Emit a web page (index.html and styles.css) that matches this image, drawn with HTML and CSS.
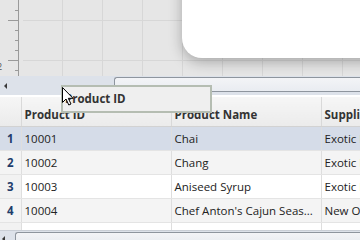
FILE: index.html
```html
<!DOCTYPE html>
<html lang="en">
<head>
    <meta charset="UTF-8">
    <title>Products</title>
    <link rel="stylesheet" href="styles.css">
</head>
<body>
    <div class="screen">
        <div class="designer">
            <svg class="ruler" width="23" height="76" viewBox="0 0 23 76">
                <line x1="18.5" y1="0" x2="18.5" y2="76" stroke="#9a9a9a"/>
                <g stroke="#9a9a9a">
                    <line x1="15" y1="10.5" x2="18" y2="10.5"/>
                    <line x1="8" y1="20.5" x2="18" y2="20.5"/>
                    <line x1="15" y1="30.5" x2="18" y2="30.5"/>
                    <line x1="15" y1="40.5" x2="18" y2="40.5"/>
                    <line x1="15" y1="50.5" x2="18" y2="50.5"/>
                    <line x1="8" y1="60.5" x2="18" y2="60.5"/>
                    <line x1="15" y1="70.5" x2="18" y2="70.5"/>
                </g>
                <text x="-3" y="70" font-size="9" fill="#555" font-family="Open Sans, sans-serif">2</text>
            </svg>
            <div class="canvas">
                <div class="node"></div>
            </div>
        </div>

        <div class="hbar hbar-top">
            <span class="arrow"></span>
            <div class="thumb"></div>
        </div>

        <table class="grid">
            <colgroup>
                <col class="col-rownum">
                <col class="col-wide">
                <col class="col-wide">
                <col class="col-wide">
            </colgroup>
            <thead>
                <tr>
                    <th class="rownum"></th>
                    <th>Product ID</th>
                    <th>Product Name</th>
                    <th>Supplier</th>
                </tr>
            </thead>
            <tbody>
                <tr class="selected">
                    <td class="rownum">1</td>
                    <td>10001</td>
                    <td>Chai</td>
                    <td>Exotic Liquids</td>
                </tr>
                <tr class="alt">
                    <td class="rownum">2</td>
                    <td>10002</td>
                    <td>Chang</td>
                    <td>Exotic Liquids</td>
                </tr>
                <tr>
                    <td class="rownum">3</td>
                    <td>10003</td>
                    <td>Aniseed Syrup</td>
                    <td>Exotic Liquids</td>
                </tr>
                <tr class="alt">
                    <td class="rownum">4</td>
                    <td>10004</td>
                    <td>Chef Anton's Cajun Seas...</td>
                    <td>New Orleans Cajun Delights</td>
                </tr>
                <tr class="partial">
                    <td class="rownum"></td>
                    <td></td>
                    <td></td>
                    <td></td>
                </tr>
            </tbody>
        </table>

        <div class="hbar hbar-bottom">
            <span class="arrow"></span>
            <div class="thumb"><span class="grip">||||</span></div>
        </div>

        <div class="drag-ghost">Product ID</div>
        <svg class="cursor" width="13" height="19" viewBox="0 0 13 19">
            <path d="M0.5 0.5 L0.5 15.5 L4 12 L6.8 18 L9 17 L6.3 11.3 L11 11.3 Z" fill="#fff" stroke="#000" stroke-width="1"/>
        </svg>
    </div>
</body>
</html>
```

FILE: styles.css
```css
body {
    margin: 0;
    font-family: "Open Sans", Arial, sans-serif;
    font-size: 11.5px;
    color: #222;
}

.screen {
    position: relative;
    width: 360px;
    height: 240px;
    overflow: hidden;
    background: #ffffff;
    display: flex;
    flex-direction: column;
}

/* diagram designer area */

.designer {
    display: flex;
    height: 76px;
    background: #e6e6e6;
    overflow: hidden;
    flex-shrink: 0;
}

.ruler {
    display: block;
    flex-shrink: 0;
}

.canvas {
    position: relative;
    flex: 1;
    background-image:
        linear-gradient(to right, #d7d7d7 1px, transparent 1px),
        linear-gradient(to bottom, #d7d7d7 1px, transparent 1px);
    background-size: 40px 40px;
    background-position: 39px 20px;
}

.node {
    position: absolute;
    left: 159px;
    top: -30px;
    width: 220px;
    height: 88px;
    background: #ffffff;
    border-radius: 20px;
    box-shadow: 0 4px 14px rgba(0, 0, 0, 0.28);
}

/* scrollbars */

.hbar {
    position: relative;
    display: flex;
    align-items: flex-start;
    background: #dde2ea;
    flex-shrink: 0;
}

.hbar-top {
    height: 19px;
    padding-top: 1px;
    box-sizing: border-box;
    margin-bottom: 2px;
}

.hbar-bottom {
    height: 10px;
    padding-top: 1px;
    box-sizing: border-box;
    margin-top: auto;
    border-top: 1px solid #c9ced6;
}

.arrow {
    width: 0;
    height: 0;
    border-top: 3px solid transparent;
    border-bottom: 3px solid transparent;
    border-right: 3px solid #3a3a3a;
    margin: 6px 0 0 4px;
}

.thumb {
    flex: 1;
    height: 15px;
    box-sizing: border-box;
    margin-left: 107px;
    background: linear-gradient(#f3f4f7, #e9ecf1);
    border: 1px solid #8e959e;
    border-right: none;
    border-radius: 3px 0 0 3px;
}

.hbar-bottom .arrow {
    margin: 4px 0 0 2px;
}

.hbar-bottom .thumb {
    margin-left: 10px;
    height: 12px;
    text-align: center;
}

.grip {
    display: inline-block;
    margin-left: 229px;
    font-size: 8px;
    line-height: 9px;
    color: #888;
    letter-spacing: -1px;
}

/* data grid */

.grid {
    border-collapse: collapse;
    table-layout: fixed;
    width: 471px;
    flex-shrink: 0;
}

.col-rownum {
    width: 21px;
}

.col-wide {
    width: 150px;
}

.grid th {
    height: 29px;
    padding: 0 0 0 3px;
    text-align: left;
    font-weight: bold;
    color: #333;
    background: linear-gradient(#f6f6f6, #ebebeb);
    border-right: 1px solid #d9d9d9;
    border-bottom: 1px solid #d2d2d2;
    box-sizing: border-box;
    padding-top: 6px;
    white-space: nowrap;
}

.grid td {
    height: 24px;
    padding: 0 0 0 3px;
    border-right: 1px solid #dedede;
    border-bottom: 1px solid #e4e4e4;
    white-space: nowrap;
    overflow: hidden;
    box-sizing: border-box;
}

.grid .rownum {
    padding: 0;
    text-align: center;
    font-weight: bold;
    color: #1f3d6b;
    background: #f2f2f2;
}

.grid th.rownum {
    background: linear-gradient(#f6f6f6, #ebebeb);
}

.grid tr.selected td {
    background: #d5dce8;
}

.grid tr.alt td {
    background: #f4f4f4;
}

.grid tr.partial td {
    height: 8px;
    border-bottom: none;
}

/* drag feedback */

.drag-ghost {
    position: absolute;
    left: 61px;
    top: 85px;
    width: 151px;
    height: 28px;
    box-sizing: border-box;
    border: 2px solid #b5bdb2;
    background: #efefef;
    padding-left: 2px;
    line-height: 23px;
    font-weight: bold;
    color: #333;
}

.cursor {
    position: absolute;
    left: 62px;
    top: 87px;
}
```
